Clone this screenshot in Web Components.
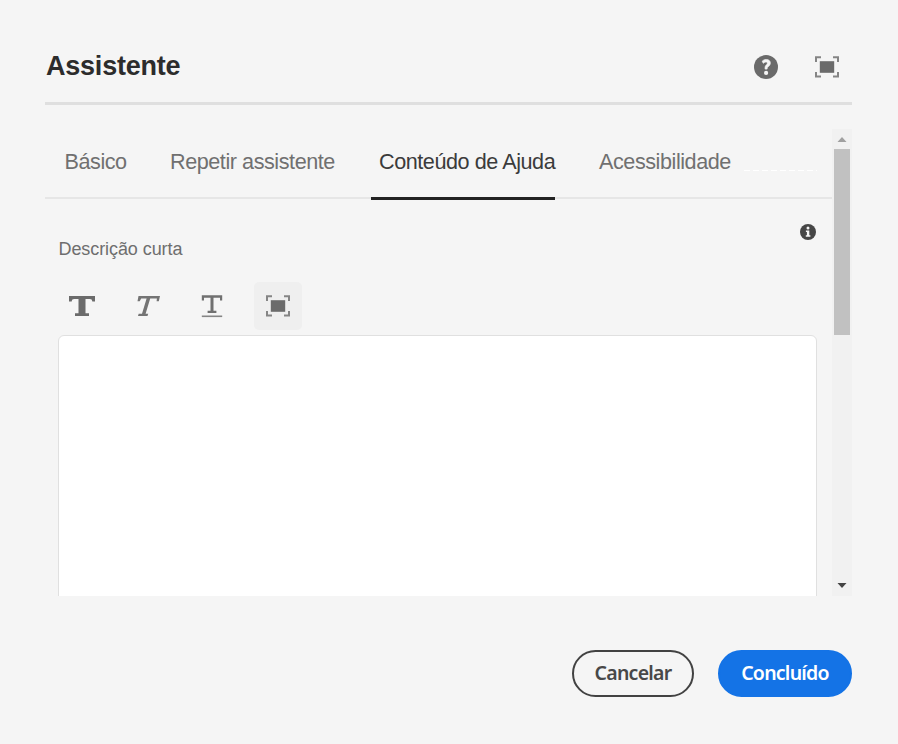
<!DOCTYPE html>
<html lang="pt">
<head>
<meta charset="utf-8">
<title>Assistente</title>
<style>
html,body{margin:0;height:100%;background:#f5f5f5}
body{font-family:"Liberation Sans",Arial,sans-serif;color:#6e6e6e;overflow:hidden}
</style>
</head>
<body>
<wizard-dialog></wizard-dialog>
<script>
const define = (name, html) => {
  const t = document.createElement('template');
  t.innerHTML = html;
  customElements.define(name, class extends HTMLElement {
    constructor() {
      super();
      this.attachShadow({mode: 'open'}).append(t.content.cloneNode(true));
    }
  });
};

const icons = {
  help: [26, 26, '<circle cx="13" cy="13" r="12" fill="#6a6a6a"/><path d="M9.2 7.2C10.5 5.9 12 5.4 13.4 5.5C15.9 5.6 17.3 7 17.3 9C17.3 10.9 16.2 11.8 15.1 12.7C14.3 13.4 14.1 13.9 14.1 15.1H12.1C11.9 13 12.2 12.1 13.2 11.1C14.1 10.2 14.3 9.8 14.3 9.2C14.3 8.2 13.6 7.9 12.6 8.1C11.7 8.3 11 8.7 10.3 9.3Z" fill="#f5f5f5" stroke="#f5f5f5" stroke-width=".7"/><circle cx="13.1" cy="18.9" r="2.1" fill="#f5f5f5"/>'],
  full: [26, 24, '<path d="M2 7V2.2H7M19 2.2H24V7M24 17V21.5H19M7 21.5H2V17" fill="none" stroke="#858585" stroke-width="2"/><path d="M5.8 6.2H20.2V17.8H5.8Z" fill="#6b6b6b"/>'],
  bold: [28, 22, '<path d="M1 1H27V6.6H24.3C24.1 4.7 23.5 4 21.8 4H17.5V18.2H21V21H7V18.2H10.5V4H6.2C4.5 4 3.9 4.7 3.7 6.6H1Z" fill="#6b6b6b"/>'],
  italic: [26, 22, '<path d="M3.5 1H25L23.8 6.2H21.6L21.9 3.6H15.2L10.6 18.7H13.2L12.5 21H3L3.7 18.7H7L11.6 3.6H6.2L4.7 6.2H2.5Z" fill="#747474"/>'],
  under: [24, 24, '<path d="M1.8 1.2H22.2V6.6H20V3.8H13.5V16.7H16.4V19H7.6V16.7H10.5V3.8H4V6.6H1.8Z" fill="#707070"/><path d="M1.8 22.3H22.2" stroke="#858585" stroke-width="1.6"/>'],
  info: [18, 18, '<circle cx="9" cy="9" r="8" fill="#464646"/><circle cx="9" cy="4.9" r="1.5" fill="#f5f5f5"/><path d="M6.9 7.5H10.3V12.2H11.4V13.7H6.8V12.2H7.9V9H6.9Z" fill="#f5f5f5"/>']
};
customElements.define('ui-icon', class extends HTMLElement {
  connectedCallback() {
    const [w, h, body] = icons[this.getAttribute('name')];
    const root = this.shadowRoot || this.attachShadow({mode: 'open'});
    root.innerHTML = `<style>:host{display:block;width:${w}px;height:${h}px;flex:none}svg{display:block}</style><svg width="${w}" height="${h}" viewBox="0 0 ${w} ${h}">${body}</svg>`;
  }
});

define('dialog-header', `<style>
:host{display:flex;box-sizing:border-box;height:59.5px;border-bottom:3.5px solid #dfdfdf;align-items:flex-start}
h1{margin:5px 0 0 1px;font:bold 27px/32px "Liberation Sans",Arial,sans-serif;letter-spacing:-.22px;color:#2c2c2c;flex:1}
.a{display:flex;gap:35px;align-items:center;padding:9px 12px 0 0}
</style><h1><slot></slot></h1><div class="a"><ui-icon name="help"></ui-icon><ui-icon name="full"></ui-icon></div>`);

define('tab-item', `<style>
:host{display:block;box-sizing:border-box;height:71px;padding:21px 0 0 9px;font-size:21.6px;line-height:24px;letter-spacing:-.44px;color:#707070;white-space:nowrap}
:host([selected]){color:#3b3b3b;padding-left:8.5px;background:linear-gradient(#222,#222) 0 100%/184px 3px no-repeat}
</style><slot></slot>`);

define('tab-list', `<style>
:host{display:grid;grid-template-columns:105.5px 209.5px 219.5px 1fr;height:71px;padding-left:10.5px;background:linear-gradient(#e6e6e6,#e6e6e6) 0 68px/100% 2px no-repeat,repeating-linear-gradient(90deg,#fff 0 6px,transparent 6px 9px) 699px 41px/73px 1px no-repeat}
</style><slot></slot>`);

define('format-bar', `<style>
:host{display:flex;height:48px;align-items:center;padding-left:9.5px}
.full{margin-left:30px;width:48px;height:48px;border-radius:5px;background:#efefef;display:grid;place-items:center}
</style><ui-icon name="bold"></ui-icon><ui-icon name="italic" style="margin-left:39px"></ui-icon><ui-icon name="under" style="margin:1px 0 0 39px"></ui-icon><div class="full"><ui-icon name="full"></ui-icon></div>`);

define('rich-editor', `<style>
:host{display:block;padding:22px 15px 0 13px}
.row{display:flex;height:59.5px;justify-content:space-between}
.label{font-size:18px;line-height:20px;letter-spacing:-.08px;padding:17px 0 0 .5px}
.area{box-sizing:border-box;height:400px;margin-top:5.5px;background:#fff;border:1.5px solid #e0e0e0;border-radius:6px}
</style><div class="row"><span class="label"><slot></slot></span><ui-icon name="info" style="margin-top:.5px"></ui-icon></div>
<format-bar></format-bar><div class="area"></div>`);

define('scroll-bar', `<style>
:host{display:flex;flex-direction:column;width:20px;height:100%;background:#f1f1f1;align-items:center}
.thumb{width:16px;height:186px;background:#c1c1c1}
svg{display:block;flex:none}
.sp{flex:1}
</style><svg width="20" height="20"><path d="M5.5 13L10 8L14.5 13Z" fill="#a0a0a0"/></svg><div class="thumb"></div><div class="sp"></div><svg width="20" height="20"><path d="M5.5 7H14.5L10 12Z" fill="#444"/></svg>`);

define('pill-button', `<style>
:host{display:flex;box-sizing:border-box;width:122px;height:47px;border:2px solid #424242;border-radius:24px;padding-bottom:2px;align-items:center;justify-content:center;font:600 19.5px/24px "Noto Sans",sans-serif;letter-spacing:-.75px;color:#484848}
:host([primary]){width:134px;background:#1473e6;border-color:#1473e6;color:#fff}
</style><slot></slot>`);

define('wizard-dialog', `<style>
:host{display:flex;flex-direction:column;box-sizing:border-box;width:898px;height:744px;padding:45px 46px 0 45px;background:#f5f5f5}
.body{display:flex;height:467px;margin-top:24.5px;overflow:hidden}
.content{width:787px;height:467px;overflow:hidden}
footer{display:flex;justify-content:flex-end;gap:24px;padding-top:54px}
</style>
<dialog-header>Assistente</dialog-header>
<div class="body"><div class="content">
<tab-list><tab-item>Básico</tab-item><tab-item>Repetir assistente</tab-item><tab-item selected>Conteúdo de Ajuda</tab-item><tab-item>Acessibilidade</tab-item></tab-list>
<rich-editor>Descrição curta</rich-editor>
</div><scroll-bar></scroll-bar></div>
<footer><pill-button>Cancelar</pill-button><pill-button primary>Concluído</pill-button></footer>`);
</script>
</body>
</html>
